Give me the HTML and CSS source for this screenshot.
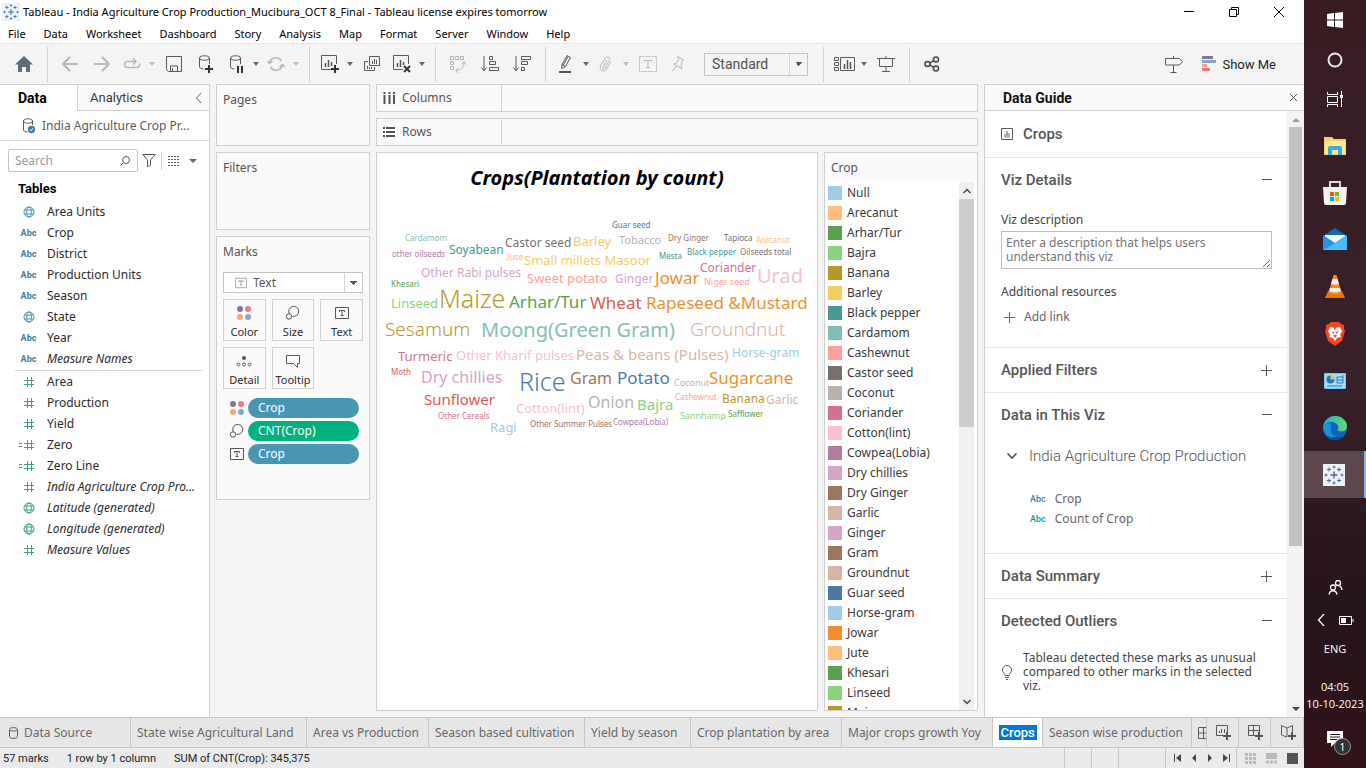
FILE: index.html
```html
<!DOCTYPE html>
<html lang="en">
<head>
<meta charset="utf-8">
<title>Tableau - India Agriculture Crop Production</title>
<link rel="stylesheet" href="styles.css">
</head>
<body>
<svg class="defs" aria-hidden="true">
  <symbol id="globe" viewBox="0 0 12 12"><g fill="none" stroke="currentColor"><circle cx="6" cy="6" r="5"/><ellipse cx="6" cy="6" rx="2.3" ry="5"/><path d="M1.5 4h9M1.5 8h9"/></g></symbol>
  <symbol id="hash" viewBox="0 0 12 12"><path d="M4.5 1v10M8.5 1v10M1 4.5h10M1 8.5h10" fill="none" stroke="currentColor"/></symbol>
  <symbol id="eqhash" viewBox="0 0 16 12"><path d="M0 4.500h3M0 7.500h3M8.500 1v10M12.500 1v10M5 4.500h10M5 8.500h10" fill="none" stroke="currentColor"/></symbol>
  <symbol id="tbox" viewBox="0 0 14 14"><path d="M.5 1.500h13v11H.5zM4.500 6V4.500h5V6M7 4.500v5M5.500 9.500h3" fill="none" stroke="currentColor"/></symbol>
  <symbol id="size" viewBox="0 0 16 16"><g fill="none" stroke="currentColor"><path d="M4.500 9A5 5 0 1 1 7.500 11.200"/><circle cx="4" cy="11.500" r="2.700"/></g></symbol>
  <symbol id="colors" viewBox="0 0 16 16"><circle cx="4" cy="4" r="3" fill="#8a7099"/><circle cx="12" cy="4" r="3" fill="#f0788c"/><circle cx="4" cy="12" r="3" fill="#eba883"/><circle cx="12" cy="12" r="3" fill="#85a7c9"/></symbol>
  <symbol id="plus" viewBox="0 0 12 12"><path d="M6.500 1v11M1 6.500h11" stroke="currentColor" fill="none"/></symbol>
  <symbol id="minus" viewBox="0 0 12 12"><path d="M2 5.500h10" stroke="currentColor" fill="none"/></symbol>
  <symbol id="tableau" viewBox="0 0 22 22"><rect width="22" height="22" fill="#eef2f5"/><g stroke="#3c6e97" fill="none"><path d="M11 7.500v7M7.500 11h7" stroke-width="1.400"/><path d="M6 3.500v4M4 5.500h4M16 3.500v4M14 5.500h4M6 14.500v4M4 16.500h4M16 14.500v4M14 16.500h4M11 1.500v3M9.500 3h3M11 17.500v3M9.500 19h3M3 9.500v3M1.500 11h3M19 9.500v3M17.500 11h3"/></g></symbol>
</svg>

<div class="app">
  <header class="titlebar">
    <svg class="logo" width="18" height="18"><use href="#tableau"/></svg>
    <span class="window-title">Tableau - India Agriculture Crop Production_Mucibura_OCT 8_Final - Tableau license expires tomorrow</span>
    <button class="win" aria-label="Minimize"><svg width="12" height="12"><path d="M1 5.500h10" stroke="#000"/></svg></button>
    <button class="win" aria-label="Restore"><svg width="12" height="12"><path d="M1.500 3.500h7v7h-7zM3.500 3.500v-2h7v7h-2" fill="none" stroke="#000"/></svg></button>
    <button class="win" aria-label="Close"><svg width="12" height="12"><path d="M1 1l10 10M11 1L1 11" stroke="#000"/></svg></button>
  </header>
  <nav class="menubar">
    <button>File</button><button>Data</button><button>Worksheet</button><button>Dashboard</button><button>Story</button><button>Analysis</button><button>Map</button><button>Format</button><button>Server</button><button>Window</button><button>Help</button>
  </nav>

  <div class="toolbar">
    <button class="home" aria-label="Start page"><svg width="18" height="16"><path d="M9 0l9 8.500h-3V16h-4v-5H7v5H3V8.500H0z" fill="#5f6b78"/></svg></button>
    <i class="sep first"></i>
    <button class="tool off" aria-label="Undo"><svg width="16" height="16"><path d="M16 8H1M8 1L1 8l7 7" class="ln heavy"/></svg></button>
    <button class="tool off" aria-label="Redo"><svg width="16" height="16"><path d="M0 8h15M8 1l7 7-7 7" class="ln heavy"/></svg></button>
    <button class="tool slim off" aria-label="Replay"><svg width="18" height="12"><path d="M12 3.500H4.500a3 3 0 0 0 0 6h9a3 3 0 0 0 3-4M10 .5l3 3-3 3" class="ln bold"/></svg></button>
    <button class="caret off" aria-label="Replay options"></button>
    <button class="tool" aria-label="Save"><svg width="16" height="16"><path d="M.5.500h15v15h-13l-2-2zM4.500 15v-5h7v5M6.500 12v3" class="ln"/></svg></button>
    <button class="tool" aria-label="New data source"><svg width="18" height="18"><path d="M2.500 3v9c0 1 2 2 4 2M12.500 3v6M2.500 3c0-3 10-3 10 0s-10 3-10 0" class="ln"/><path d="M12 10v8M8 14h8" stroke="#333" stroke-width="2"/></svg></button>
    <button class="tool slim" aria-label="Pause updates"><svg width="18" height="18"><path d="M3.500 3v9c0 1 2 2 4 2M13.500 3v6M3.500 3c0-3 10-3 10 0s-10 3-10 0" class="ln"/><path d="M11 11v7M15 11v7" stroke="#333" stroke-width="2"/></svg></button>
    <button class="caret" aria-label="Update options"></button>
    <button class="tool slim off" aria-label="Refresh"><svg width="18" height="16"><path d="M2.500 7a6.500 6.500 0 0 1 12-2M15.500 9a6.500 6.500 0 0 1-12 2M0 5l2.500 2.500L5.500 5M12.500 11l3-2.500L18 11" class="ln bold"/></svg></button>
    <button class="caret off" aria-label="Refresh options"></button>
    <i class="sep"></i>
    <button class="tool slim" aria-label="New worksheet"><svg width="20" height="18"><path d="M11 14.500H1.500V.5h15V9" class="ln"/><path d="M5.500 8v4M8.500 5v7M11.500 7v4" stroke="#555" stroke-width="1.500"/><path d="M15 10v8M11 14h8" stroke="#333" stroke-width="2"/></svg></button>
    <button class="caret" aria-label="New worksheet options"></button>
    <button class="tool" aria-label="Duplicate"><svg width="18" height="16"><path d="M6.500.5h10v9h-10zM5 5.500H1.500v9h10V11M9.500 5v3M11.500 3v5M13.500 4v4M4.500 10v3M6.500 11v2M8.500 11v2" class="ln"/></svg></button>
    <button class="tool slim" aria-label="Clear sheet"><svg width="20" height="18"><path d="M11 14.500H1.500V.5h15V9" class="ln"/><path d="M5.500 8v4M8.500 5v7M11.500 7v3" stroke="#555" stroke-width="1.500"/><path d="M12 11l6 6M18 11l-6 6" stroke="#333" stroke-width="2"/></svg></button>
    <button class="caret" aria-label="Clear options"></button>
    <i class="sep"></i>
    <button class="tool off" aria-label="Swap rows and columns"><svg width="18" height="18"><path d="M1.500 1.500h3v3h-3zM6.500 1.500h3v3h-3zM11.500 1.500h3v3h-3zM1.500 6.500h3v3h-3zM1.500 11.500h3v3h-3zM7 15.500c5 0 8-3 8-8M9.500 13l-3 2.500 3 2.500M12.500 9.500l2.500-3 2.500 3" class="ln"/></svg></button>
    <button class="tool" aria-label="Sort ascending"><svg width="18" height="16"><path d="M3 0v14M.5 11.500L3 15l2.500-3.500M8.500.5h3v3h-3zM8.500 5.500h6v3h-6zM8.500 11.500h9v3h-9z" class="ln"/></svg></button>
    <button class="tool" aria-label="Sort descending"><svg width="18" height="16"><path d="M3 0v14M.5 11.500L3 15l2.500-3.500M8.500.5h9v3h-9zM8.500 5.500h6v3h-6zM8.500 11.500h3v3h-3z" class="ln"/></svg></button>
    <i class="sep"></i>
    <button class="tool slim" aria-label="Highlight"><svg width="14" height="18"><path d="M2.500 13.500l.5-4 5-9 3.500 2-5 9zM3 9.500l3.500 2M9 1.500l-5 9" class="ln"/><path d="M0 17h12" stroke="#555" stroke-width="2"/></svg></button>
    <button class="caret" aria-label="Highlight options"></button>
    <button class="tool slim off" aria-label="Group"><svg width="14" height="16"><path d="M2 9l4-6.500c2-3 6-1 4.500 2L6 12c-1 1.500-3 .5-2-1l4-7M2 9c-3 5 3 8 5.500 4L12 6" class="ln"/></svg></button>
    <button class="caret off" aria-label="Group options"></button>
    <button class="tool off" aria-label="Show mark labels"><svg width="18" height="16"><path d="M.5.500h17v15H.5z" class="ln dash"/><path d="M5.500 6V4.500h7V6M9 4.500v7M7 11.500h4" class="ln"/></svg></button>
    <button class="tool slim off" aria-label="Fix axes"><svg width="14" height="16"><path d="M6.500.5l6 3.500-1.500 1-1 4.500 1 3-8.500-4.500 3-1L8 3zM5.500 10l-4 5" class="ln"/></svg></button>
    <select class="fit" aria-label="Fit"><option>Standard</option></select>
    <i class="sep wide"></i>
    <button class="tool slim" aria-label="Show cards"><svg width="21" height="16"><path d="M6.500 1.500h14v13h-14zM.5 1.500h4v3h-4zM.5 6.500h4v3h-4zM.5 11.500h4v3h-4z" class="ln"/><path d="M10.500 8v5M13.500 4v9M16.500 6v7" stroke="#555" stroke-width="1.500"/></svg></button>
    <button class="caret" aria-label="Card options"></button>
    <button class="tool" aria-label="Presentation mode"><svg width="18" height="17"><path d="M0 2.500h18M2.500 2.500v8h13v-8M9 0v2M9 10.500v5M5 15.500h8" class="ln"/></svg></button>
    <i class="sep"></i>
    <button class="tool" aria-label="Share"><svg width="16" height="16"><g class="ln thick"><circle cx="3.500" cy="8" r="2.500"/><circle cx="12" cy="3.500" r="2.500"/><circle cx="12" cy="12.500" r="2.500"/><path d="M5.800 6.800l4-2.200M5.800 9.200l4 2.200"/></g></svg></button>
    <span class="grow"></span>
    <button class="tool" aria-label="Data Guide"><svg width="20" height="18"><path d="M1.500 3.500h14l3 3-3 3.500h-14zM9.500 1v2M9.500 10v7M6.500 17.500h6" class="ln"/></svg></button>
    <button class="showme"><svg width="15" height="16"><path d="M0 0h11v3H0z" fill="#83739b"/><path d="M0 4h14v3H0z" fill="#84a4c8"/><path d="M0 8h5v3H0z" fill="#e9a684"/><path d="M0 12h8v3H0z" fill="#ec7385"/></svg>Show Me</button>
  </div>

  <main class="workspace">
    <aside class="data-pane">
      <div class="pane-tabs"><button class="on">Data</button><button>Analytics</button><button class="fold" aria-label="Collapse"><svg width="8" height="12"><path d="M6 1L1.500 6 6 11" class="ln"/></svg></button></div>
      <div class="source"><svg width="14" height="16"><path d="M1.500 3v9c0 1 2 2 4 2M10.500 3v4M1.500 3c0-3 9-3 9 0s-9 3-9 0" class="ln"/><circle cx="9.500" cy="11.500" r="3.700" fill="#3e7fa3"/><path d="M7.800 11.500l1.300 1.300 2-2.500" stroke="#fff" fill="none"/></svg><span>India Agriculture Crop Pr...</span></div>
      <div class="search">
        <label class="search-box"><input type="text" placeholder="Search" aria-label="Search"><svg width="10" height="10"><circle cx="6" cy="4" r="3.500" class="ln"/><path d="M3.500 6.500L.5 9.500" class="ln"/></svg></label>
        <button aria-label="Filter fields"><svg width="14" height="13"><path d="M.8.500h12.400L8.500 6v5.500l-3 1V6z" class="ln"/></svg></button>
        <i class="bar"></i>
        <button aria-label="View as"><svg width="12" height="10"><path d="M0 .5h12M0 3.500h12M0 6.500h12M0 9.500h12" class="ln cols"/></svg></button>
        <button class="down" aria-label="View options"></button>
      </div>
      <h2>Tables</h2>
      <ul class="fields dims">
        <li><svg width="12" height="12"><use href="#globe"/></svg>Area Units</li>
        <li><b>Abc</b>Crop</li>
        <li><b>Abc</b>District</li>
        <li><b>Abc</b>Production Units</li>
        <li><b>Abc</b>Season</li>
        <li><svg width="12" height="12"><use href="#globe"/></svg>State</li>
        <li><b>Abc</b>Year</li>
        <li><b>Abc</b><em>Measure Names</em></li>
      </ul>
      <ul class="fields meas">
        <li><svg width="12" height="12"><use href="#hash"/></svg>Area</li>
        <li><svg width="12" height="12"><use href="#hash"/></svg>Production</li>
        <li><svg width="12" height="12"><use href="#hash"/></svg>Yield</li>
        <li><svg class="eq" width="16" height="12"><use href="#eqhash"/></svg>Zero</li>
        <li><svg class="eq" width="16" height="12"><use href="#eqhash"/></svg>Zero Line</li>
        <li><svg width="12" height="12"><use href="#hash"/></svg><em>India Agriculture Crop Pro...</em></li>
        <li><svg width="12" height="12"><use href="#globe"/></svg><em>Latitude (generated)</em></li>
        <li><svg width="12" height="12"><use href="#globe"/></svg><em>Longitude (generated)</em></li>
        <li><svg width="12" height="12"><use href="#hash"/></svg><em>Measure Values</em></li>
      </ul>
    </aside>

    <section class="cards">
      <div class="card pages">Pages</div>
      <div class="card filters">Filters</div>
      <div class="card marks">
        <label for="mark-type">Marks</label>
        <div class="mark-select"><svg width="12" height="12"><use href="#tbox"/></svg><select id="mark-type"><option>Text</option></select></div>
        <div class="mark-grid">
          <button><svg width="16" height="16"><use href="#colors"/></svg>Color</button>
          <button><svg width="16" height="16"><use href="#size"/></svg>Size</button>
          <button><svg width="14" height="16"><use href="#tbox"/></svg>Text</button>
          <button><svg width="16" height="16"><circle cx="8" cy="5" r="2" fill="#555"/><g class="ln"><circle cx="2.500" cy="11.500" r="1.500"/><circle cx="8" cy="11.500" r="1.500"/><circle cx="13.500" cy="11.500" r="1.500"/></g></svg>Detail</button>
          <button><svg width="16" height="16"><path d="M1.500 2.500h13v8h-2v4l-4-4h-7z" class="ln"/></svg>Tooltip</button>
        </div>
        <ul class="pills">
          <li><svg width="16" height="16"><use href="#colors"/></svg><button>Crop</button></li>
          <li><svg width="16" height="16"><use href="#size"/></svg><button class="green">CNT(Crop)</button></li>
          <li><svg width="14" height="14"><use href="#tbox"/></svg><button>Crop</button></li>
        </ul>
      </div>
    </section>

    <section class="sheet">
      <div class="shelf"><span><svg width="12" height="12"><path d="M1.500 0v2M6.500 0v2M11 0v2M1.500 3v9M6.500 3v9M11 3v9" stroke="#555" stroke-width="2"/></svg>Columns</span></div>
      <div class="shelf"><span><svg width="12" height="12"><path d="M0 2h2M0 6h2M0 10h2M3 2h9M3 6h9M3 10h9" stroke="#555" stroke-width="2"/></svg>Rows</span></div>
      <div class="stage">
        <div class="viz">
          <h1>Crops(Plantation by count)</h1>
          <svg class="cloud" width="440" height="240" role="img" aria-label="Crops by count">
            <text class="s8 blue" x="235" y="23">Guar seed</text>
            <text class="s8 lteal" x="28" y="36">Cardamom</text>
            <text class="s12 gray" x="128" y="42">Castor seed</text>
            <text class="s13 yellow" x="196" y="41">Barley</text>
            <text class="s11 lgray" x="242" y="39">Tobacco</text>
            <text class="s8 brown" x="291" y="36">Dry Ginger</text>
            <text class="s8 gray" x="347" y="36">Tapioca</text>
            <text class="s8 lorange" x="379" y="38">Arecanut</text>
            <text class="s8 purple" x="15" y="52">other oilseeds</text>
            <text class="s12 teal" x="72" y="49">Soyabean</text>
            <text class="s9 lorange" x="130" y="55">Jute</text>
            <text class="s13 yellow" x="147" y="60">Small millets Masoor</text>
            <text class="s8 teal" x="282" y="54">Mesta</text>
            <text class="s8 teal" x="310" y="50">Black pepper</text>
            <text class="s8 gray" x="363" y="50">Oilseeds total</text>
            <text class="s12 lpurple" x="44" y="72">Other Rabi pulses</text>
            <text class="s13 pink" x="150" y="78">Sweet potato</text>
            <text class="s12 lpurple" x="238" y="78">Ginger</text>
            <text class="s17 orange" x="278" y="79">Jowar</text>
            <text class="s12 rose" x="323" y="67">Coriander</text>
            <text class="s9 lpink" x="327" y="80">Niger seed</text>
            <text class="s20 lrose" x="380" y="78">Urad</text>
            <text class="s8 green" x="14" y="82">Khesari</text>
            <text class="s13 lgreen" x="14" y="103">Linseed</text>
            <text class="s25 olive" x="62" y="103">Maize</text>
            <text class="s17 green" x="132" y="103">Arhar/Tur</text>
            <text class="s17 red" x="213" y="104">Wheat</text>
            <text class="s17 orange" x="269" y="104">Rapeseed &amp;Mustard</text>
            <text class="s19 olive" x="8" y="131">Sesamum</text>
            <text class="s20 lteal" x="104" y="132">Moong(Green Gram)</text>
            <text class="s19 lbrown" x="313" y="131">Groundnut</text>
            <text class="s13 rose" x="21" y="156">Turmeric</text>
            <text class="s13 lrose" x="79" y="155">Other Kharif pulses</text>
            <text class="s15 lbrown" x="199" y="155">Peas &amp; beans (Pulses)</text>
            <text class="s12 lblue" x="355" y="152">Horse-gram</text>
            <text class="s8 red" x="14" y="170">Moth</text>
            <text class="s16 lpurple" x="44" y="178">Dry chillies</text>
            <text class="s25 blue" x="142" y="186">Rice</text>
            <text class="s16 brown" x="193" y="179">Gram</text>
            <text class="s17 blue" x="240" y="179">Potato</text>
            <text class="s9 lgray" x="297" y="181">Coconut</text>
            <text class="s17 orange" x="332" y="179">Sugarcane</text>
            <text class="s15 red" x="47" y="200">Sunflower</text>
            <text class="s8 rose" x="61" y="214">Other Cereals</text>
            <text class="s13 lrose" x="139" y="208">Cotton(lint)</text>
            <text class="s16 lgray" x="211" y="203">Onion</text>
            <text class="s15 lgreen" x="260" y="205">Bajra</text>
            <text class="s8 pink" x="298" y="195">Cashewnut</text>
            <text class="s12 olive" x="345" y="198">Banana</text>
            <text class="s12 lbrown" x="389" y="199">Garlic</text>
            <text class="s9 lgreen" x="303" y="214">Sannhamp</text>
            <text class="s8 green" x="351" y="212">Safflower</text>
            <text class="s13 lblue" x="113" y="227">Ragi</text>
            <text class="s8 brown" x="153" y="222">Other Summer Pulses</text>
            <text class="s8 purple" x="236" y="220">Cowpea(Lobia)</text>
          </svg>
        </div>
        <div class="legend">
          <h3>Crop</h3>
          <div class="legend-body">
            <ul>
              <li><i class="lblue"></i>Null</li><li><i class="lorange"></i>Arecanut</li><li><i class="green"></i>Arhar/Tur</li><li><i class="lgreen"></i>Bajra</li><li><i class="olive"></i>Banana</li><li><i class="yellow"></i>Barley</li><li><i class="teal"></i>Black pepper</li><li><i class="lteal"></i>Cardamom</li><li><i class="pink"></i>Cashewnut</li><li><i class="gray"></i>Castor seed</li><li><i class="lgray"></i>Coconut</li><li><i class="rose"></i>Coriander</li><li><i class="lrose"></i>Cotton(lint)</li><li><i class="purple"></i>Cowpea(Lobia)</li><li><i class="lpurple"></i>Dry chillies</li><li><i class="brown"></i>Dry Ginger</li><li><i class="lbrown"></i>Garlic</li><li><i class="lpurple"></i>Ginger</li><li><i class="brown"></i>Gram</li><li><i class="lbrown"></i>Groundnut</li><li><i class="blue"></i>Guar seed</li><li><i class="lblue"></i>Horse-gram</li><li><i class="orange"></i>Jowar</li><li><i class="lorange"></i>Jute</li><li><i class="green"></i>Khesari</li><li><i class="lgreen"></i>Linseed</li><li><i class="olive"></i>Maize</li>
            </ul>
            <div class="scroll"><svg width="8" height="6"><path d="M.5 5L4 1.500 7.500 5" class="ln thick"/></svg><i></i><svg width="8" height="6"><path d="M.5 1L4 4.500 7.500 1" class="ln thick"/></svg></div>
          </div>
        </div>
      </div>
    </section>

    <aside class="guide">
      <header><h2>Data Guide</h2><button aria-label="Close Data Guide"><svg width="9" height="9"><path d="M1 1l7 7M8 1L1 8" class="ln"/></svg></button></header>
      <div class="guide-body">
        <div class="guide-main">
          <section class="sheet-name"><h3><svg width="12" height="12"><path d="M.5.500h11v11H.5z" class="ln"/><path d="M3 9.500V6h2V3h2v2.500h2v4z" fill="#aaa"/></svg>Crops</h3></section>
          <section class="details">
            <h3>Viz Details<button aria-label="Collapse"><svg width="12" height="12"><use href="#minus"/></svg></button></h3>
            <label for="desc">Viz description</label>
            <textarea id="desc" placeholder="Enter a description that helps users understand this viz"></textarea>
            <p>Additional resources</p>
            <button class="add"><svg width="12" height="12"><use href="#plus"/></svg>Add link</button>
          </section>
          <section><h3>Applied Filters<button aria-label="Expand"><svg width="12" height="12"><use href="#plus"/></svg></button></h3></section>
          <section class="indata">
            <h3>Data in This Viz<button aria-label="Collapse"><svg width="12" height="12"><use href="#minus"/></svg></button></h3>
            <h4><svg width="10" height="8"><path d="M.5 1.500L5 6l4.500-4.500" class="ln thick"/></svg>India Agriculture Crop Production</h4>
            <ul><li><b>Abc</b>Crop</li><li><b class="count">Abc</b>Count of Crop</li></ul>
          </section>
          <section><h3>Data Summary<button aria-label="Expand"><svg width="12" height="12"><use href="#plus"/></svg></button></h3></section>
          <section class="outliers">
            <h3>Detected Outliers<button aria-label="Collapse"><svg width="12" height="12"><use href="#minus"/></svg></button></h3>
            <div class="tip"><svg width="12" height="15"><path d="M4 10.500c0-2-2.500-2.500-2.500-5.500a4.500 4.500 0 0 1 9 0c0 3-2.500 3.500-2.500 5.500zM4 12.500h4M5 14.500h2" class="ln"/></svg><p>Tableau detected these marks as unusual compared to other marks in the selected viz.</p></div>
          </section>
        </div>
        <div class="scroll"><svg width="8" height="5"><path d="M0 5l4-4 4 4z" fill="#999"/></svg><i></i><svg width="8" height="5"><path d="M0 0l4 4 4-4z" fill="#444"/></svg></div>
      </div>
    </aside>
  </main>

  <nav class="tabs">
    <button class="source-tab"><svg width="9" height="12"><path d="M.5 2.500v7c0 2.500 8 2.500 8 0v-7c0-2.500-8-2.500-8 0 0 2 8 2 8 0" class="ln"/></svg>Data Source</button>
    <button class="name">State wise Agricultural Land</button>
    <button class="name">Area vs Production</button>
    <button class="name">Season based cultivation</button>
    <button class="name">Yield by season</button>
    <button class="name">Crop plantation by area</button>
    <button class="name">Major crops growth Yoy</button>
    <div class="current"><input type="text" value="Crops" aria-label="Sheet name"></div>
    <button class="name">Season wise production</button>
    <button class="cut" aria-label="Next dashboard"><svg width="8" height="12"><path d="M8 .5H.5v11H8M.5 6H8M5.500.5v11" class="ln"/></svg></button>
    <button class="new" aria-label="New worksheet"><svg width="16" height="16"><path d="M9 10.500H.5V.5h11V7M3.500 6v2M5.500 4v4M8.500 4v4" class="ln"/><path d="M11 7v8M7 11h8" stroke="#555" stroke-width="2"/></svg></button>
    <button class="new" aria-label="New dashboard"><svg width="16" height="16"><path d="M8 10.500H.5V.5h11V7M.5 5.500h11M5.500.5v10" class="ln"/><path d="M11 7v8M7 11h8" stroke="#555" stroke-width="2"/></svg></button>
    <button class="new" aria-label="New story"><svg width="16" height="16"><path d="M6 12L.5 10V.5L6 3l5.500-2.500V7M6 3v9" class="ln"/><path d="M11 7v8M7 11h8" stroke="#555" stroke-width="2"/></svg></button>
  </nav>
  <footer class="status">
    <span>57 marks</span><span>1 row by 1 column</span><span>SUM of CNT(Crop): 345,375</span>
    <i class="grow"></i><i class="slot"></i><i class="slot"></i><i class="slot wide"></i>
    <div class="pager">
      <button aria-label="First sheet"><svg width="8" height="8"><path d="M.5 0v8" stroke="#444"/><path d="M7 0v8L2 4z" fill="#444"/></svg></button>
      <button aria-label="Previous sheet"><svg width="8" height="8"><path d="M6 0v8L2 4z" fill="#444"/></svg></button>
      <button aria-label="Next sheet"><svg width="8" height="8"><path d="M2 0v8l4-4z" fill="#444"/></svg></button>
      <button aria-label="Last sheet"><svg width="8" height="8"><path d="M1 0v8l5-4z" fill="#444"/><path d="M7.500 0v8" stroke="#444"/></svg></button>
    </div>
    <div class="views">
      <button aria-label="Grid view"><svg width="11" height="11"><path d="M0 1.500h11M0 5.500h11M0 9.500h11" stroke="#bbb" stroke-width="3" stroke-dasharray="3 1"/></svg></button>
      <button aria-label="Filmstrip view"><svg width="11" height="11"><path d="M0 0h11v6H0z" fill="#bbb"/><path d="M0 9h11" stroke="#bbb" stroke-width="3" stroke-dasharray="3 1"/></svg></button>
      <button aria-label="Tab view"><svg width="11" height="11"><path d="M0 0h11v11H0z" fill="#555"/></svg></button>
    </div>
  </footer>
</div>

<aside class="taskbar">
  <button class="sys" aria-label="Start"><svg width="16" height="16"><path d="M0 2l7-1v6.500H0zM8 1l8-1v7.500H8zM0 8.500h7V15l-7-1zM8 8.500h8V16l-8-1z" fill="#fff"/></svg></button>
  <button class="sys" aria-label="Cortana"><svg width="16" height="16"><circle cx="8" cy="8" r="6.500" fill="none" stroke="#e8e8e8" stroke-width="2"/></svg></button>
  <button class="sys view" aria-label="Task view"><svg width="18" height="16"><path d="M1.500 1v2.500h10V1M1.500 5.500h10v6h-10zM1.500 16v-2.500h10V16M15.500 0v16" fill="none" stroke="#fff"/><path d="M14 4h3v3h-3z" fill="#fff"/></svg></button>
  <button aria-label="File Explorer"><svg width="22" height="20"><path d="M0 1h8l2 2h12v16H0z" fill="#f6cf65"/><path d="M1 5h20v13H1z" fill="#ffe79c"/><path d="M4 19v-7q0-2 2-2h10q2 0 2 2v7h-4v-5H8v5z" fill="#3ea9dd"/></svg></button>
  <button aria-label="Store"><svg width="24" height="24"><path d="M7 7V1h10v6" fill="none" stroke="#ddd" stroke-width="2"/><path d="M0 6h24l-1 16q0 2-2 2H3q-2 0-2-2z" fill="#f4f4f4"/><path d="M7 11h4v4H7z" fill="#f25022"/><path d="M12 11h4v4h-4z" fill="#7fba00"/><path d="M7 16h4v4H7z" fill="#00a4ef"/><path d="M12 16h4v4h-4z" fill="#ffb900"/></svg></button>
  <button aria-label="Mail"><svg width="24" height="24"><path d="M0 8l12-8 12 8v14H0z" fill="#1268b3"/><path d="M2 7h20v9H2z" fill="#f3f9ff"/><path d="M0 7l12 8L24 7v15H0z" fill="#2196e3"/><path d="M24 7v15H0l12-7z" fill="#45bcf3"/></svg></button>
  <button aria-label="VLC"><svg width="20" height="23"><path d="M3 16h14l3 7H0z" fill="#e9760d"/><path d="M8.500 0h3l5 18q-6 3-13 0z" fill="#f58a1f"/><path d="M7.500 4h5l1.500 5q-4 1.500-8 0zM5 13h10l1 3q-6 3-12 0z" fill="#eee"/></svg></button>
  <button aria-label="Brave"><svg width="20" height="24"><path d="M6 0h8l2 2 3 1v4l1 2-3 10-7 5-7-5L0 9l1-2V3l3-1z" fill="#f4471d"/><path d="M5 5l5 1 5-1 2 4-2 4 1 2-4 1-2 3-2-3-4-1 1-2-2-4z" fill="#fff"/><path d="M6 9l3 1v2zM14 9l-3 1v2zM8 13h4l-2 3zM9 6h2l-1 3z" fill="#f4471d"/></svg></button>
  <button aria-label="Control Panel"><svg width="22" height="16"><rect width="22" height="16" rx="1" fill="#75c5ef"/><path d="M1 1h20v14H1z" fill="#a5dcf7"/><circle cx="6.500" cy="6.500" r="4" fill="#1b78bd"/><path d="M6.500 6.500v-4a4 4 0 0 1 4 4z" fill="#f5c251"/><path d="M13 4h6M13 7h6M13 10h6M3 13h15M13 4v6M19 2v8" stroke="#277eb8" fill="none"/></svg></button>
  <button aria-label="Edge"><svg width="24" height="24"><defs><linearGradient id="eg" x1="0" x2="1"><stop offset="0" stop-color="#27a4dc"/><stop offset="1" stop-color="#67dc61"/></linearGradient></defs><circle cx="12" cy="12" r="12" fill="#0d64b8"/><path d="M0 11C1 4 6 0 12 0c7 0 12 5 12 10 0 5-5 6-8 5-3-1 0-2-1-5-2-5-11-6-15 1z" fill="url(#eg)"/><path d="M8 11c-2 8 7 13 14 8-4 7-15 6-18-1-2-5 1-9 6-9z" fill="#124a91"/><path d="M9 9c-3 4-1 10 5 12-8 2-13-3-14-10 2-4 6-5 9-2z" fill="#1892dc"/></svg></button>
  <button class="active" aria-label="Tableau"><svg width="22" height="22"><use href="#tableau"/></svg></button>
  <span class="grow"></span>
  <div class="tray">
    <button aria-label="People"><svg width="15" height="15"><g fill="none" stroke="#fff" stroke-width="1.300"><circle cx="10" cy="3" r="2.500"/><path d="M8.500 5.500C12 5 13.500 7 14 10"/><circle cx="5" cy="7.500" r="2.500"/><path d="M1 14.500c1-5 7-5 8 0"/></g></svg></button>
    <div class="pair"><svg width="8" height="12"><path d="M7 0L1.500 6 7 12" fill="none" stroke="#fff" stroke-width="1.300"/></svg><svg width="15" height="9"><path d="M.5.500h12v8H.5zM14 3v3" fill="none" stroke="#fff"/><path d="M2 2h5v5H2z" fill="#fff"/></svg></div>
    <span class="lang">ENG</span>
    <time>04:05<br>10-10-2023</time>
    <button class="notes" aria-label="Notifications"><svg width="16" height="16"><path d="M0 0h16v12h-8l-4 4v-4H0z" fill="#fff"/><path d="M3 3.500h10M3 6h10M3 8.500h7" stroke="#2a151a"/></svg><span>1</span></button>
  </div>
</aside>
</body>
</html>
```
FILE: styles.css
```css
* { box-sizing: border-box; margin: 0; padding: 0; }
body { display: flex; height: 100vh; overflow: hidden; font: 12px/16px "Noto Sans", "Open Sans", sans-serif; color: #3a3a3a; background: #f4f4f4; }
button, input, select, textarea { font: inherit; color: inherit; border: 0; background: none; border-radius: 0; outline: none; }
ul { list-style: none; }
svg { display: block; flex: none; }
.defs { position: absolute; width: 0; height: 0; }
.ln { fill: none; stroke: #5a5a5a; stroke-width: 1; }
.ln.heavy { stroke-width: 2; }
.ln.bold { stroke-width: 1.500; }
.ln.thick { stroke-width: 1.500; stroke: #444; }
.dash { stroke-dasharray: 2 1; }
.cols { stroke-dasharray: 2 1; }
.off { opacity: .4; }
.grow { flex: 1; }

.app { flex: 1; min-width: 0; display: flex; flex-direction: column; }

/* window chrome */
.titlebar { display: flex; align-items: center; height: 24px; padding-left: 2px; background: #fff; color: #000; font-size: 11px; }
.window-title { flex: 1; padding-left: 3px; white-space: nowrap; }
.win { width: 45px; height: 20px; display: grid; place-items: center; }
.win:last-child { margin-right: 3px; }
.menubar { display: flex; gap: 18px; height: 19px; padding-left: 8px; background: #fff; color: #000; }
.menubar button { font-size: 11px; line-height: 19px; }

.toolbar { display: flex; align-items: center; height: 41px; padding-right: 28px; border-top: 1px solid #e8e8e8; background: #f4f4f4; }
.tool, .home { display: grid; place-items: center; width: 32px; height: 32px; }
.tool.slim { width: 28px; }
.home { width: 47px; }
.caret { width: 12px; height: 32px; display: grid; place-items: center; }
.caret::before, .down::before { content: ""; border: 3px solid transparent; border-top: 4px solid #666; border-bottom: 0; }
.down::before { border-width: 4px 4px 0; }
.sep { width: 1px; height: 35px; margin: 0 6px 0 7px; background: #cfcfcf; }
.sep.first { margin-left: 0; }
.sep.wide { margin-left: 15px; }
.fit, .mark-select select { appearance: none; background: linear-gradient(#d4d4d4, #d4d4d4) right 17px top / 1px 100% no-repeat, linear-gradient(to bottom left, #555 50%, transparent 50%) right 8px center / 4px 4px no-repeat, linear-gradient(to bottom right, #555 50%, transparent 50%) right 4px center / 4px 4px no-repeat; }
.fit { width: 104px; height: 23px; margin-left: 12px; padding-left: 7px; border: 1px solid #c4c4c4; font: 14px Roboto, sans-serif; color: #505050; }
.showme { display: flex; align-items: center; gap: 5px; padding-left: 12px; font: 13px Roboto, sans-serif; color: #222; }

.workspace { flex: 1; min-height: 0; display: grid; grid-template-columns: 210px 154px minmax(0, 1fr) 320px; gap: 6px; }

/* data pane */
.data-pane { background: #fff; border: solid #cfcfcf; border-width: 1px 1px 0 0; overflow: hidden; }
.pane-tabs { display: flex; height: 26px; font: 13px Roboto, sans-serif; }
.pane-tabs button { border-bottom: 1px solid #d0d0d0; background: #fafafa; padding: 0 0 0 12px; text-align: left; flex: 1; }
.pane-tabs .on { flex: none; width: 78px; padding: 0 0 0 18px; border-bottom-color: #fff; border-right: 1px solid #d0d0d0; background: #fff; font-size: 14px; font-weight: 700; color: #000; }
.pane-tabs .fold { flex: none; width: 14px; padding: 0; }
.source { display: flex; gap: 6px; align-items: center; height: 30px; padding-left: 22px; border-bottom: 1px solid #dedede; color: #5a5a5a; }
.search { display: flex; align-items: center; height: 23px; margin: 8px 0 0 8px; }
.search-box { display: flex; align-items: center; width: 130px; height: 23px; padding-right: 7px; border: 1px solid #c4c4c4; border-radius: 2px; }
.search-box input { flex: 1; min-width: 0; padding-left: 6px; }
.search-box input::placeholder { color: #999; opacity: 1; }
.search button { width: 22px; height: 22px; display: grid; place-items: center; }
.search .bar { width: 1px; height: 18px; margin: 0 1px; background: #d0d0d0; }
.search .down { width: 16px; }
.data-pane h2 { margin: 8px 0 4px 18px; font: 700 13px/17px Roboto, sans-serif; color: #000; }
.fields li { display: grid; grid-template-columns: 37px 1fr; align-items: center; height: 21px; padding-left: 10px; white-space: nowrap; color: #2c2c2c; }
.fields svg, .fields b { justify-self: center; }
.fields .eq { justify-self: start; margin-left: 9px; }
.fields b, .guide b { font: 700 9px/16px Roboto, sans-serif; color: #3e7ea0; }
.dims svg { color: #4a93ad; }
.meas { margin: 1px 6px 0 0; padding-top: 1px; position: relative; }
.meas::before { content: ""; position: absolute; top: 0; left: 15px; right: 0; height: 1px; background: #d6d6d6; }
.meas svg { color: #3fa17c; }

/* cards */
.cards { display: flex; flex-direction: column; gap: 6px; }
.card { padding: 7px 6px; border: 1px solid #cfcfcf; background: #fafafa; color: #555; }
.pages { height: 62px; }
.filters { height: 78px; }
.marks { height: 264px; }
.marks label { display: block; }
.mark-select { display: flex; align-items: center; height: 21px; margin: 12px 0 6px; padding-left: 11px; border: 1px solid #c4c4c4; background: #fff; }
.mark-select svg { opacity: .6; }
.mark-select select { flex: 1; height: 19px; padding-left: 6px; font-size: 12px; }
.mark-grid { display: grid; grid-template-columns: repeat(3, 1fr); gap: 6px; }
.mark-grid button { display: flex; flex-direction: column; align-items: center; justify-content: space-between; height: 42px; padding: 5px 0 0; border: 1px solid #d0d0d0; background: #fafafa; font-size: 11px; color: #2c2c2c; }
.pills { display: grid; gap: 3px; margin-top: 9px; }
.pills li { display: grid; grid-template-columns: 14px 1fr; align-items: center; justify-items: center; gap: 4px; padding: 0 4px 0 7px; height: 20px; color: #555; }
.pills button { width: 100%; height: 20px; padding-left: 10px; border-radius: 10px; background: #4996b2; color: #fff; text-align: left; font-size: 12px; }
.pills .green { background: #00b180; }
.card use { color: #555; }

/* sheet */
.sheet { display: flex; flex-direction: column; gap: 6px; padding-bottom: 6px; min-height: 0; }
.shelf { height: 28px; border: 1px solid #cfcfcf; background: #fafafa; color: #555; }
.shelf span { display: flex; align-items: center; gap: 7px; width: 125px; height: 26px; padding-left: 6px; border-right: 1px solid #cfcfcf; }
.stage { flex: 1; min-height: 0; display: flex; gap: 6px; }
.viz { flex: 1; min-width: 0; border: 1px solid #cfcfcf; background: #fff; }
.viz h1 { padding: 11px 0 13px; text-align: center; font: italic 700 20px/28px "Noto Sans", sans-serif; color: #000; }
.cloud { margin: 0 auto; overflow: visible; }
.cloud text { fill: currentColor; }
.s8 { font-size: 8px; } .s9 { font-size: 9px; } .s11 { font-size: 11px; } .s12 { font-size: 12px; } .s13 { font-size: 13px; }
.s15 { font-size: 15px; } .s16 { font-size: 16px; } .s17 { font-size: 17px; } .s19 { font-size: 19px; } .s20 { font-size: 20px; } .s25 { font-size: 25px; }
.s19, .s25 { font-weight: 300; }
.blue { color: #4e79a7; } .lblue { color: #a0cbe8; }
.orange { color: #f28e2b; } .lorange { color: #ffbe7d; }
.green { color: #59a14f; } .lgreen { color: #8cd17d; }
.olive { color: #b6992d; } .yellow { color: #f1ce63; }
.teal { color: #499894; } .lteal { color: #86bcb6; }
.red { color: #e15759; } .pink, .lpink { color: #ff9d9a; }
.gray { color: #79706e; } .lgray { color: #bab0ac; }
.rose { color: #d37295; } .lrose { color: #fabfd2; }
.purple { color: #b07aa1; } .lpurple { color: #d4a6c8; }
.brown { color: #9d7660; } .lbrown { color: #d7b5a6; }

.legend { width: 154px; display: flex; flex-direction: column; border: 1px solid #cfcfcf; background: #fafafa; }
.legend h3 { height: 28px; padding: 7px 6px 0; font-size: 12px; font-weight: 400; color: #555; }
.legend-body { flex: 1; min-height: 0; display: flex; justify-content: space-between; padding: 1px 3px 0; background: #fff; overflow: hidden; }
.legend ul { padding-top: 1px; }
.legend li { display: flex; align-items: center; gap: 5px; height: 20px; }
.legend li i { width: 14px; height: 14px; background: currentColor; }
.scroll { display: flex; flex-direction: column; align-items: center; width: 15px; background: #f0f0f0; }
.scroll svg { margin: 6px 0 5px; }
.scroll i { width: 15px; background: #cdcdcd; }
.scroll svg:last-child { margin-top: auto; }
.legend .scroll i { height: 228px; }

/* data guide */
.guide { display: flex; flex-direction: column; min-height: 0; border: solid #cfcfcf; border-width: 1px 0 0 1px; background: #fff; color: #555; }
.guide header { display: flex; justify-content: space-between; align-items: center; height: 26px; padding: 0 6px 0 18px; border-bottom: 1px solid #d0d0d0; background: #fafafa; }
.guide h2 { font: 700 14px/20px Roboto, sans-serif; color: #111; }
.guide-body { flex: 1; min-height: 0; display: flex; overflow: hidden; }
.guide-main { flex: 1; }
.guide section { padding: 0 15px 0 16px; border-bottom: 1px solid #e6e6e6; }
.guide h3 { display: flex; align-items: center; justify-content: space-between; height: 44px; font: 500 15px Roboto, sans-serif; }
.guide .sheet-name h3 { justify-content: flex-start; gap: 10px; height: 46px; }
.details { height: 190px; }
.details label, .details p { display: block; margin-top: 10px; line-height: 16px; color: #444; }
.details textarea { display: block; width: 100%; height: 38px; margin: 3px 0 15px; padding: 4px; border: 1px solid #bdbdbd; line-height: 14px; overflow: hidden; }
.details textarea::placeholder { color: #757575; opacity: 1; }
.add { display: flex; align-items: center; gap: 9px; margin-top: 9px; padding-left: 2px; color: #666; }
.indata { height: 161px; }
.indata h4 { display: flex; align-items: center; gap: 12px; height: 38px; padding-left: 6px; font: 300 15px Roboto, sans-serif; }
.indata ul { padding: 14px 0 0 29px; }
.indata li { display: flex; gap: 9px; height: 20px; align-items: center; color: #666; }
.guide .indata b { font-size: 9px; font-weight: 500; }
.guide .indata .count { color: #00a67a; }
.guide .outliers { border: 0; }
.tip { display: flex; align-items: center; gap: 10px; padding-top: 8px; line-height: 14px; color: #444; }
.guide .scroll { width: 17px; background: #f2f2f2; }
.guide .scroll i { width: 13px; height: 419px; background: #c1c1c1; }

/* bottom strips */
.tabs { display: grid; grid-template-columns: 131px 176px 122px 156px 106px 151px 151px 50px minmax(0, 1fr) 15px 32px 32px 33px; height: 31px; border: solid #c6c6c6; border-width: 1px 0; background: #e6e6e6; }
.tabs > * { display: flex; align-items: center; justify-content: center; border-right: 1px solid #c6c6c6; color: #666; white-space: nowrap; overflow: hidden; }
.tabs .name { justify-content: flex-start; padding-left: 6px; }
.tabs .source-tab { justify-content: flex-start; padding-left: 9px; gap: 6px; }
.tabs .current { background: #fff; }
.tabs input { width: 38px; height: 15px; padding-left: 2px; background: #0078d7; color: #fff; font: 500 13px Roboto, sans-serif; }
.tabs .cut { justify-content: flex-end; }
.tabs .new { padding-left: 3px; }
.status { display: flex; align-items: center; height: 20px; padding-left: 3px; background: #eaeaea; font: 11px Roboto, sans-serif; color: #222; }
.status span { margin-right: 18px; }
.slot { width: 27px; height: 20px; border-left: 1px solid #c6c6c6; }
.slot.wide { width: 47px; }
.pager { display: flex; width: 71px; height: 20px; border-left: 1px solid #c6c6c6; padding-left: 4px; }
.views { display: flex; width: 68px; height: 20px; border-left: 1px solid #c6c6c6; padding-left: 3px; }
.pager button, .views button { display: grid; place-items: center; width: 16px; height: 20px; }
.views button { width: 21px; }

/* taskbar */
.taskbar { width: 62px; flex: none; display: flex; flex-direction: column; background: linear-gradient(#391b22, #38202a 50%, #25141a 80%, #35121a); color: #fff; font-family: "Open Sans", sans-serif; }
.taskbar button { display: grid; place-items: center; height: 47px; }
.taskbar .sys { height: 40px; }
.taskbar .view { height: 38px; margin-bottom: 4px; }
.taskbar .active { border-right: 2px solid #7ab8ee; background: #5b474d; }
.tray { display: flex; flex-direction: column; align-items: center; font-size: 11px; line-height: 17px; text-align: center; }
.taskbar .tray button { height: 24px; }
.pair { display: flex; align-items: center; gap: 14px; height: 42px; }
.lang { margin: -1px 0 21px; }
.tray time { margin-bottom: 12px; white-space: nowrap; }
.taskbar .tray .notes { position: relative; height: 44px; padding: 0 0 14px; align-content: center; }
.notes span { position: absolute; right: -8px; bottom: 13px; width: 17px; height: 17px; border: 1px solid #999; border-radius: 50%; background: #333; line-height: 15px; }
```
